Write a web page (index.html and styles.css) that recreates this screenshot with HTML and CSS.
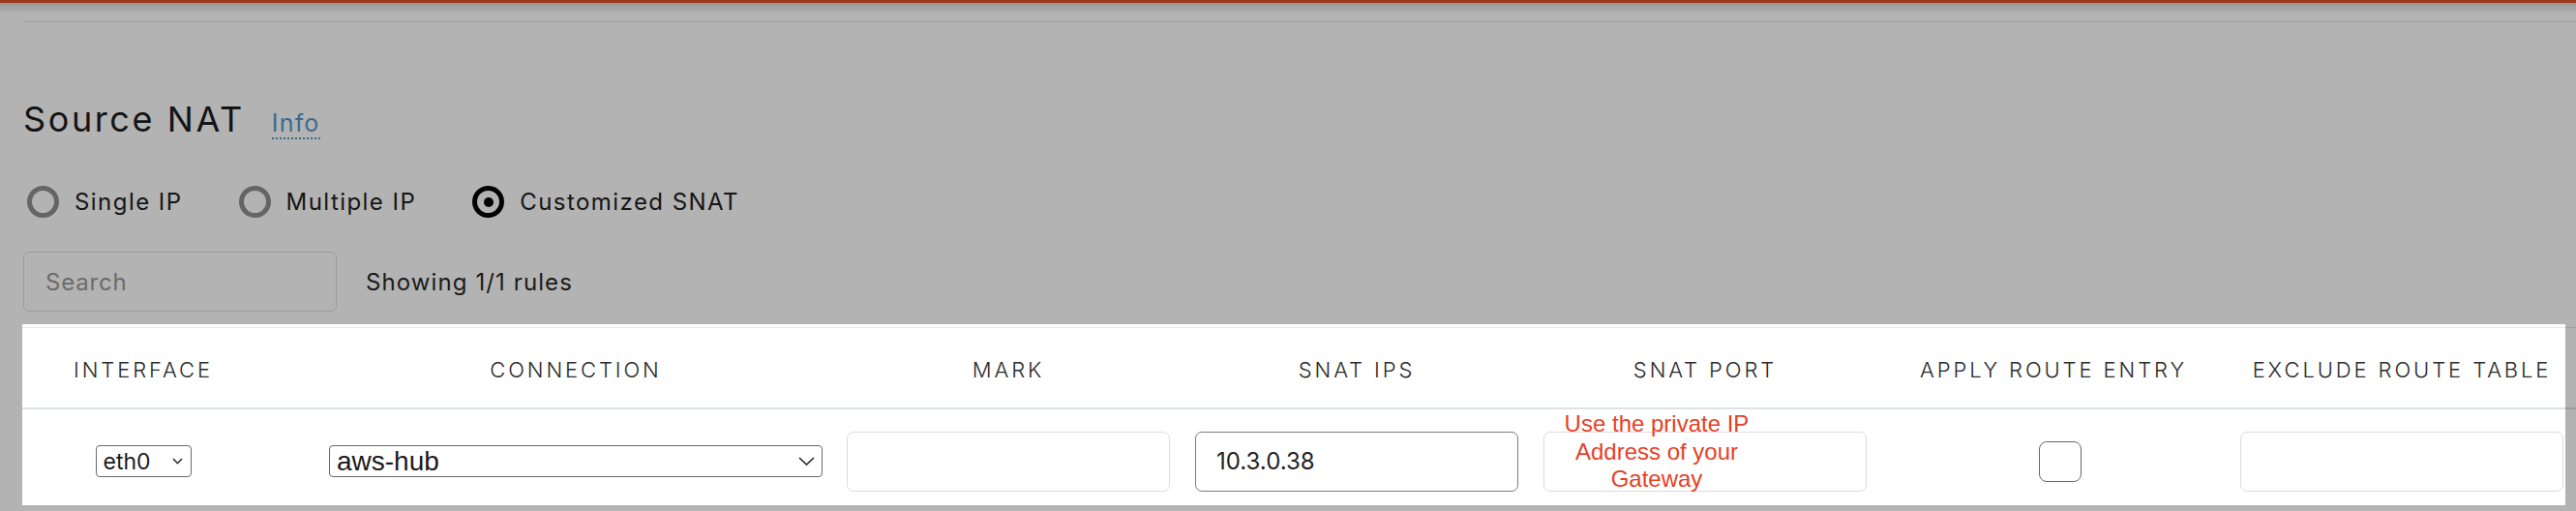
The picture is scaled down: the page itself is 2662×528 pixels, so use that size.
FILE: index.html
```html
<!DOCTYPE html>
<html>
<head>
<meta charset="utf-8">
<link rel="stylesheet" href="styles.css">
</head>
<body>
<div class="topbar"></div>
<div class="shadow"></div>
<div class="page">
  <div class="divider"></div>
  <div class="title-row">
    <h1 class="title">Source NAT</h1>
    <a class="info">Info</a>
  </div>
  <div class="radios">
    <label class="radio"><span class="dot"></span><span class="rlabel">Single IP</span></label>
    <label class="radio"><span class="dot"></span><span class="rlabel">Multiple IP</span></label>
    <label class="radio checked"><span class="dot"></span><span class="rlabel">Customized SNAT</span></label>
  </div>
  <div class="search-row">
    <div class="search">Search</div>
    <div class="count">Showing 1/1 rules</div>
  </div>
</div>
<div class="table">
  <div class="thead">
    <div class="th">INTERFACE</div>
    <div class="th conn">CONNECTION</div>
    <div class="th">MARK</div>
    <div class="th">SNAT IPS</div>
    <div class="th">SNAT PORT</div>
    <div class="th">APPLY ROUTE ENTRY</div>
    <div class="th">EXCLUDE ROUTE TABLE</div>
  </div>
  <div class="trow">
    <div class="td">
      <div class="select small"><span>eth0</span>
        <svg width="11" height="7" viewBox="0 0 11 7"><path d="M1 1 L5.5 5.8 L10 1" fill="none" stroke="#222" stroke-width="1.4"/></svg>
      </div>
    </div>
    <div class="td conn">
      <div class="select wide"><span>aws-hub</span>
        <svg width="17" height="9" viewBox="0 0 17 9"><path d="M1 1 L8.5 8 L16 1" fill="none" stroke="#222" stroke-width="1.6"/></svg>
      </div>
    </div>
    <div class="td"><div class="input"></div></div>
    <div class="td"><div class="input dark">10.3.0.38</div></div>
    <div class="td port">
      <div class="input"></div>
      <div class="note">Use the private IP<br>Address of your<br>Gateway</div>
    </div>
    <div class="td"><div class="check"></div></div>
    <div class="td"><div class="input"></div></div>
  </div>
  <div class="mask"></div>
</div>
</body>
</html>
```
FILE: styles.css
```css
* { box-sizing: border-box; }
html, body { margin: 0; padding: 0; }
body {
  width: 2662px;
  height: 528px;
  overflow: hidden;
  background: #b3b3b3;
  font-family: Inter, "Noto Sans", sans-serif;
  color: #141414;
}
.topbar { height: 3px; background: #9b3a1a; }
.shadow { height: 11px; background: linear-gradient(#979797, #b3b3b3); }
.page { padding-left: 24px; }
.divider { margin-top: 8px; height: 1px; background: #9d9d9d; }
.title-row {
  display: flex;
  align-items: baseline;
  gap: 28px;
  margin-top: 80px;
  height: 40px;
}
.title {
  margin: 0;
  font-size: 36px;
  font-weight: 400;
  line-height: 40px;
  letter-spacing: 2.6px;
}
.info {
  font-size: 25px;
  color: #3c6a8b;
  border-bottom: 2px dotted #3c6a8b;
  line-height: 30px;
  letter-spacing: 1.2px;
}
.radios {
  display: flex;
  align-items: center;
  gap: 58px;
  margin-top: 49px;
  padding-left: 4px;
  height: 33px;
}
.radio { display: flex; align-items: center; gap: 16px; }
.dot {
  width: 33px; height: 33px;
  border: 5px solid #656565;
  border-radius: 50%;
  display: flex; align-items: center; justify-content: center;
}
.radio.checked .dot { border-color: #000; }
.radio.checked .dot::after {
  content: "";
  width: 10px; height: 10px;
  border-radius: 50%;
  background: #000;
}
.rlabel { font-size: 24px; color: #151515; letter-spacing: 1.45px; }
.search-row {
  display: flex;
  align-items: center;
  gap: 30px;
  margin-top: 35px;
}
.search {
  width: 324px; height: 62px;
  border: 1px solid #9c9c9c;
  border-radius: 5px;
  padding-left: 22px;
  display: flex; align-items: center;
  font-size: 24px;
  color: #6b6b6b;
  letter-spacing: 0.8px;
}
.count { font-size: 24px; color: #1a1a1a; letter-spacing: 1.1px; }

.table {
  position: relative;
  margin-top: 13px;
  margin-left: 23px;
  background: #fff;
  height: 187px;
  border-top: 3px solid #fff;
}
.thead, .trow {
  display: grid;
  grid-template-columns: 250px 589px 360px 360px 360px 360px 360px;
}
.thead {
  height: 85px;
  border-top: 1px solid #e4e6e8;
  border-bottom: 2px solid #dde2e6;
}
.th {
  display: flex; align-items: center; justify-content: center;
  font-size: 22px;
  font-weight: 300;
  color: #2a2a2a;
  letter-spacing: 2.9px;
  padding-top: 3px;
}
.conn { padding-left: 55px; }
.trow { height: 99px; padding-top: 8px; }
.td {
  display: flex; align-items: center; justify-content: center;
  position: relative;
}
.select {
  height: 33px;
  border: 1px solid #6a6a6a;
  border-radius: 4px;
  display: flex; align-items: center; justify-content: space-between;
  color: #1a1a1a;
  background: #fff;
}
.select.small { width: 99px; padding: 0 8px 0 7px; font-size: 23px; }
.select.wide { width: 510px; padding: 0 7px 0 7px; font-family: "Liberation Sans", Arial, sans-serif; font-size: 28px; }
.input {
  width: 334px; height: 62px;
  border: 1px solid #dcdcdc;
  border-radius: 7px;
  display: flex; align-items: center;
  padding-left: 21px;
  font-size: 24px;
  color: #222;
}
.input.dark { border-color: #7a7a7a; }
.check {
  width: 44px; height: 42px;
  border: 1.5px solid #676767;
  border-radius: 8px;
  margin-left: 14px;
}
.note {
  position: absolute;
  left: 0; top: -7px;
  width: 260px;
  text-align: center;
  font-family: "Liberation Sans", Arial, sans-serif;
  font-size: 24px;
  line-height: 28.5px;
  color: #e63f26;
}
.mask {
  position: absolute;
  right: 0; top: -3px; bottom: 0;
  width: 11px;
  background: rgba(0, 0, 0, 0.3);
}
```
